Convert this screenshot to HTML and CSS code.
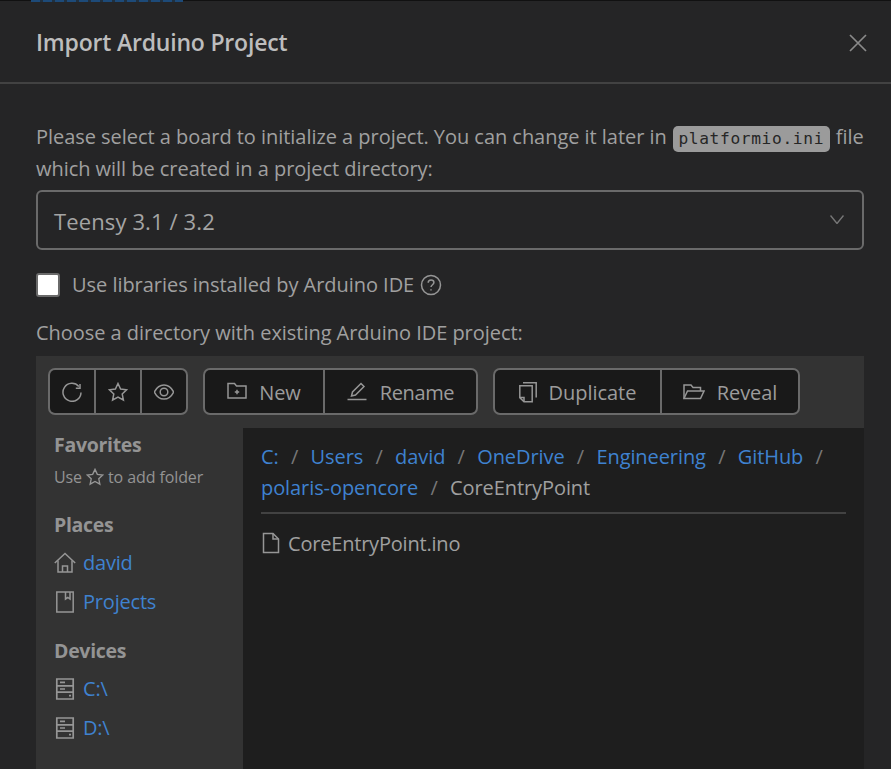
FILE: index.html
```html
<!DOCTYPE html>
<html lang="en">
<head>
<meta charset="utf-8">
<title>Import Arduino Project</title>
<link rel="stylesheet" href="styles.css">
</head>
<body>
<div class="backdrop"><span class="peek"></span></div>
<div class="modal">
  <header class="head">
    <h1 class="title">Import Arduino Project</h1>
    <svg class="close" width="18" height="18" viewBox="0 0 18 18"><path d="M1 1l16 16M17 1L1 17"/></svg>
  </header>
  <main class="body">
    <p class="intro">Please select a board to initialize a project. You can change it later in <code class="code">platformio.ini</code> file which will be created in a project directory:</p>
    <div class="select"><span>Teensy 3.1 / 3.2</span>
      <svg class="chev" width="14" height="9" viewBox="0 0 14 9"><path d="M.5.5L7 8.500 13.500.5"/></svg>
    </div>
    <div class="check-row">
      <span class="check"></span>
      <span>Use libraries installed by Arduino IDE</span>
      <svg class="ic help" width="22" height="22" viewBox="0 0 22 22"><circle cx="11" cy="11" r="9.5"/><path d="M8.2 8.8c0-1.7 1.3-2.8 2.9-2.8s2.8 1.1 2.8 2.5c0 2.3-2.9 2.2-2.9 4.600"/><path d="M11 15.200v1.400"/></svg>
    </div>
    <p class="choose">Choose a directory with existing Arduino IDE project:</p>
    <section class="browser">
      <div class="toolbar">
        <div class="group">
          <button class="btn icon-btn"><svg class="ic" width="20" height="20" viewBox="0 0 20 20"><path d="M16.800 4.400A9 9 0 1 0 19 10.500"/><path d="M18 2v4.200h-4.200"/></svg></button>
          <button class="btn icon-btn"><svg class="ic" width="20" height="20" viewBox="0 0 20 20"><path d="M10 1.500l2.600 5.600 6 .7-4.400 4.200 1.200 6L10 15l-5.400 3 1.200-6L1.400 7.800l6-.7z"/></svg></button>
          <button class="btn icon-btn"><svg class="ic" width="20" height="20" viewBox="0 0 20 20"><path d="M.4 10C2.800 5 6.200 3 10 3s7.200 2 9.600 7c-2.400 5-5.800 7-9.600 7S2.800 15 .4 10z"/><circle cx="10" cy="10" r="3.800"/></svg></button>
        </div>
        <div class="group">
          <button class="btn w-new"><svg class="ic" width="20" height="20" viewBox="0 0 20 20"><path d="M1 1.500h6.500l2 2.500H19v12H1z"/><path d="M10 7.800v4.400M7.800 10h4.400"/></svg>New</button>
          <button class="btn w-rename"><svg class="ic" width="20" height="20" viewBox="0 0 20 20"><path d="M4.500 14l1-4L14 1.500l3 3L8.500 13z"/><path d="M.5 17.500h19"/></svg><span class="tight">Rename</span></button>
        </div>
        <div class="group">
          <button class="btn w-dup"><svg class="ic" width="18" height="21" viewBox="0 0 18 21"><path d="M.8 3.800h12.400v16H5l-4.200-4.200z"/><path d="M.8 15.600H5v4.200"/><path d="M4 .8h13.200v14.800"/></svg>Duplicate</button>
          <button class="btn w-reveal"><svg class="ic" width="22" height="20" viewBox="0 0 22 20"><path d="M1 16.500V3h7l2 2.500h7.500V9"/><path d="M1 16.500L4.500 9H21l-3.500 7.500z"/></svg>Reveal</button>
        </div>
      </div>
      <div class="columns">
        <aside class="side">
          <h2 class="side-h">Favorites</h2>
          <p class="hint">Use <svg class="ic star" width="18" height="18" viewBox="0 0 20 20"><path d="M10 1.500l2.600 5.600 6 .7-4.400 4.200 1.200 6L10 15l-5.400 3 1.200-6L1.400 7.800l6-.7z"/></svg> to add folder</p>
          <h2 class="side-h gap">Places</h2>
          <a class="place"><svg class="ic" width="22" height="22" viewBox="0 0 22 22"><path d="M.8 11L11 1.500 21.200 11"/><path d="M4 8.500V20h14V8.500"/><path d="M8.500 20v-6h5v6"/></svg>david</a>
          <a class="place"><svg class="ic" width="22" height="22" viewBox="0 0 22 22"><path d="M2.800 1h16.400v20H2.800z"/><path d="M11.500 1v7l2.300-1.500L16 8V1"/></svg>Projects</a>
          <h2 class="side-h gap2">Devices</h2>
          <a class="place"><svg class="ic drive" width="22" height="22" viewBox="0 0 22 22"><path d="M2.800 1h16.400v20H2.800zM2.800 7.800h16.400M2.800 14.200h16.400M6 4.400h5M6 11h5M15 17.600h2"/></svg>C:\</a>
          <a class="place"><svg class="ic drive" width="22" height="22" viewBox="0 0 22 22"><path d="M2.800 1h16.400v20H2.800zM2.800 7.800h16.400M2.800 14.200h16.400M6 4.400h5M6 11h5M15 17.600h2"/></svg>D:\</a>
        </aside>
        <div class="pane">
          <nav class="crumbs">
            <a>C:</a><i>/</i><a>Users</a><i>/</i><a>david</a><i>/</i><a>OneDrive</a><i>/</i><a>Engineering</a><i>/</i><a>GitHub</a><i>/</i><a>polaris-opencore</a><i>/</i><span>CoreEntryPoint</span>
          </nav>
          <div class="file"><svg class="ic" width="20" height="22" viewBox="0 0 20 22"><path d="M2.500 1.500h9.500l5.500 5.500v13.500h-15z"/><path d="M12 1.500V7h5.500"/></svg>CoreEntryPoint.ino</div>
        </div>
      </div>
    </section>
  </main>
</div>
</body>
</html>
```

FILE: styles.css
```css
* { box-sizing: border-box; }
html, body { height: 100%; }
body {
  margin: 0;
  height: 769px;
  overflow: hidden;
  background: #252526;
  color: #a0a0a0;
  font-family: "Open Sans", "Noto Sans", sans-serif;
  font-size: 20px;
  letter-spacing: -0.04px;
}
.backdrop { height: 1px; background: #111; position: relative; }
.peek { position: absolute; left: 31px; top: 0; width: 152px; height: 2px; background: repeating-linear-gradient(90deg, #1d4a78 0 9px, #20303f 9px 12px); }
.modal { height: 768px; display: flex; flex-direction: column; }
.head {
  height: 83px;
  flex: none;
  display: flex;
  align-items: center;
  justify-content: space-between;
  padding: 2px 24px 0 36px;
  border-bottom: 2px solid #424242;
}
.title { margin: 0 0 2px; font-size: 23px; font-weight: 600; color: #bdbdbd; letter-spacing: -0.2px; }
.close path { stroke: #8a8a8a; stroke-width: 1.7; fill: none; }
.body { flex: 1; padding: 37px 27px 0 36px; min-height: 0; display: flex; flex-direction: column; }
.intro { margin: 0; line-height: 32px; }
.code {
  font-family: "DejaVu Sans Mono", monospace;
  font-size: 16.2px;
  line-height: 1;
  letter-spacing: 0.66px;
  color: #262626;
  background: #9b9b9b;
  border-radius: 5px;
  padding: 3px 5.5px 4px;
  margin: 0 1px 0 1px;
}
.select {
  margin-top: 5px;
  height: 60px;
  border: 2px solid #6a6a6a;
  border-radius: 6px;
  display: flex;
  align-items: center;
  justify-content: space-between;
  padding: 1px 18px 0 16px;
  font-size: 22px;
  letter-spacing: 0.12px;
  color: #a4a4a4;
}
.chev { margin-top: -2px; }
.chev path { stroke: #777; stroke-width: 1.4; fill: none; }
.check-row { margin-top: 22px; height: 25px; display: flex; align-items: center; gap: 12px; }
.check { width: 24px; height: 24px; flex: none; background: #fff; border: 2px solid #6a6a6a; border-radius: 3px; }
.help { margin-left: -6px; }
.ic { flex: none; }
.ic path, .ic circle { stroke: #969696; stroke-width: 1.5; fill: none; }
.ic.drive path { stroke-width: 1.7; }
.choose { margin: 23px 0 0; line-height: 26px; }
.browser { margin-top: 10px; flex: 1; min-height: 0; background: #333; display: flex; flex-direction: column; }
.toolbar { height: 72px; flex: none; display: flex; padding: 12px 12px; gap: 15px; }
.group { display: flex; height: 47px; background: #6a6a6a; border: 2px solid #6a6a6a; border-radius: 7px; gap: 2px; overflow: hidden; }
.btn {
  border: 0;
  background: #191919;
  color: #9c9c9c;
  font: inherit;
  letter-spacing: -0.04px;
  height: 43px;
  display: flex;
  align-items: center;
  justify-content: center;
  gap: 12px;
  padding: 1px 0 0;
}
.tight { letter-spacing: -0.4px; margin-left: 1px; }
.icon-btn { width: 44px; }
.w-new { width: 118px; }
.w-rename { width: 151px; }
.w-dup { width: 165px; }
.w-reveal { width: 136px; }
.columns { flex: 1; display: flex; min-height: 0; }
.side { width: 207px; flex: none; padding: 4px 0 0 18px; }
.side-h { margin: 0; font-size: 19.500px; font-weight: 700; line-height: 26px; color: #949494; letter-spacing: -0.3px; }
.hint { margin: 8px 0 0; font-size: 16px; line-height: 22px; color: #949494; display: flex; align-items: center; gap: 3px; letter-spacing: -0.1px; }
.star { margin: 0 1px; }
.gap { margin-top: 24px; }
.gap2 { margin-top: 17px; }
.place { display: flex; align-items: center; gap: 7px; height: 39px; color: #3f82d0; letter-spacing: -0.2px; }
.side-h + .place { margin-top: 5px; }
.pane { flex: 1; background: #1e1e1e; padding: 13px 18px 0; }
.crumbs { line-height: 31px; padding-bottom: 9px; border-bottom: 2px solid #424242; color: #a0a0a0; display: flex; flex-wrap: wrap; letter-spacing: -0.08px; }
.crumbs a { color: #3f82d0; }
.crumbs i { font-style: normal; color: #777; margin: 0 12.3px; }
.file { display: flex; align-items: center; gap: 7px; margin-top: 13px; height: 32px; letter-spacing: -0.2px; }
```
